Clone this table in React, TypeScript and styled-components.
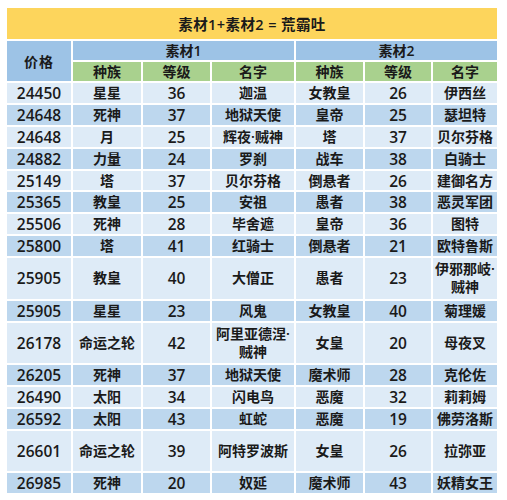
import React from 'react';
import styled, { createGlobalStyle } from 'styled-components';

type Row = {
  price: string;
  race1: string;
  level1: string;
  name1: string;
  race2: string;
  level2: string;
  name2: string;
  tall?: boolean;
};

const ROWS: Row[] = [
  { price: '24450', race1: '星星', level1: '36', name1: '迦温', race2: '女教皇', level2: '26', name2: '伊西丝' },
  { price: '24648', race1: '死神', level1: '37', name1: '地狱天使', race2: '皇帝', level2: '25', name2: '瑟坦特' },
  { price: '24648', race1: '月', level1: '25', name1: '辉夜·贼神', race2: '塔', level2: '37', name2: '贝尔芬格' },
  { price: '24882', race1: '力量', level1: '24', name1: '罗刹', race2: '战车', level2: '38', name2: '白骑士' },
  { price: '25149', race1: '塔', level1: '37', name1: '贝尔芬格', race2: '倒悬者', level2: '26', name2: '建御名方' },
  { price: '25365', race1: '教皇', level1: '25', name1: '安祖', race2: '愚者', level2: '38', name2: '恶灵军团' },
  { price: '25506', race1: '死神', level1: '28', name1: '毕舍遮', race2: '皇帝', level2: '36', name2: '图特' },
  { price: '25800', race1: '塔', level1: '41', name1: '红骑士', race2: '倒悬者', level2: '21', name2: '欧特鲁斯' },
  { price: '25905', race1: '教皇', level1: '40', name1: '大僧正', race2: '愚者', level2: '23', name2: '伊邪那岐·\n贼神', tall: true },
  { price: '25905', race1: '星星', level1: '23', name1: '风鬼', race2: '女教皇', level2: '40', name2: '菊理媛' },
  { price: '26178', race1: '命运之轮', level1: '42', name1: '阿里亚德涅·\n贼神', race2: '女皇', level2: '20', name2: '母夜叉', tall: true },
  { price: '26205', race1: '死神', level1: '37', name1: '地狱天使', race2: '魔术师', level2: '28', name2: '克伦佐' },
  { price: '26490', race1: '太阳', level1: '34', name1: '闪电鸟', race2: '恶魔', level2: '32', name2: '莉莉姆' },
  { price: '26592', race1: '太阳', level1: '43', name1: '虹蛇', race2: '恶魔', level2: '19', name2: '佛劳洛斯' },
  { price: '26601', race1: '命运之轮', level1: '39', name1: '阿特罗波斯', race2: '女皇', level2: '26', name2: '拉弥亚', tall: true },
  { price: '26985', race1: '死神', level1: '20', name1: '奴延', race2: '魔术师', level2: '43', name2: '妖精女王' },
];

const COLS = [64, 68, 67, 82, 67, 66, 64];

const GlobalStyle = createGlobalStyle`
  html, body {
    margin: 0;
    background: #ffffff;
  }
  body {
    font-family: "Open Sans", "Noto Sans CJK SC", sans-serif;
    color: #1a1a1a;
  }
`;

function multiline(text: string) {
  const parts = text.split('\n');
  return parts.map((p, i) => (
    <React.Fragment key={i}>
      {p}
      {i < parts.length - 1 && <br />}
    </React.Fragment>
  ));
}

export default function App() {
  return (
    <>
      <GlobalStyle />
      <Table>
        <colgroup>
          {COLS.map((w, i) => (
            <col key={i} style={{ width: w }} />
          ))}
        </colgroup>
        <thead>
          <TitleRow>
            <TitleCell colSpan={7}>素材1+素材2 = 荒霸吐</TitleCell>
          </TitleRow>
          <HeadRow>
            <PriceHead rowSpan={2}>价格</PriceHead>
            <GroupHead colSpan={3}>素材1</GroupHead>
            <GroupHead colSpan={3}>素材2</GroupHead>
          </HeadRow>
          <HeadRow>
            <SubHead>种族</SubHead>
            <SubHead>等级</SubHead>
            <SubHead>名字</SubHead>
            <SubHead>种族</SubHead>
            <SubHead>等级</SubHead>
            <SubHead>名字</SubHead>
          </HeadRow>
        </thead>
        <tbody>
          {ROWS.map((r, i) => (
            <DataRow key={i} $dark={i % 2 === 1} $tall={!!r.tall}>
              <NumCell>{r.price}</NumCell>
              <Cell>{r.race1}</Cell>
              <NumCell>{r.level1}</NumCell>
              <Cell>{multiline(r.name1)}</Cell>
              <Cell>{r.race2}</Cell>
              <NumCell>{r.level2}</NumCell>
              <Cell>{multiline(r.name2)}</Cell>
            </DataRow>
          ))}
        </tbody>
      </Table>
    </>
  );
}

const Table = styled.table`
  table-layout: fixed;
  width: 494px;
  margin: 6px 0 0 5px;
  border-collapse: separate;
  border-spacing: 2px;
  text-align: center;
`;

const TitleRow = styled.tr`
  height: 31px;
`;

const TitleCell = styled.th`
  padding: 0;
  background: #fdd55c;
  font-size: 14.5px;
  font-weight: 600;
  letter-spacing: 0.4px;
`;

const HeadRow = styled.tr`
  height: 19px;
`;

const PriceHead = styled.th`
  padding: 0;
  background: #9dc3e6;
  font-size: 14px;
  font-weight: 600;
  letter-spacing: 1px;
`;

const GroupHead = styled.th`
  padding: 0;
  background: #9dc3e6;
  font-size: 14px;
  font-weight: 600;
  line-height: 18px;
`;

const SubHead = styled.th`
  padding: 0;
  background: #a9d18e;
  font-size: 14px;
  font-weight: 600;
  line-height: 18px;
`;

const DataRow = styled.tr<{ $dark: boolean; $tall: boolean }>`
  height: ${(p) => (p.$tall ? '40.5px' : '19.9px')};
  background: ${(p) => (p.$dark ? '#bdd7ee' : '#deebf7')};
`;

const Cell = styled.td`
  padding: 0;
  font-size: 14px;
  font-weight: 600;
  line-height: 18px;
  white-space: nowrap;
`;

const NumCell = styled.td`
  padding: 0;
  font-size: 15.5px;
  font-weight: 600;
  line-height: 18px;
`;
